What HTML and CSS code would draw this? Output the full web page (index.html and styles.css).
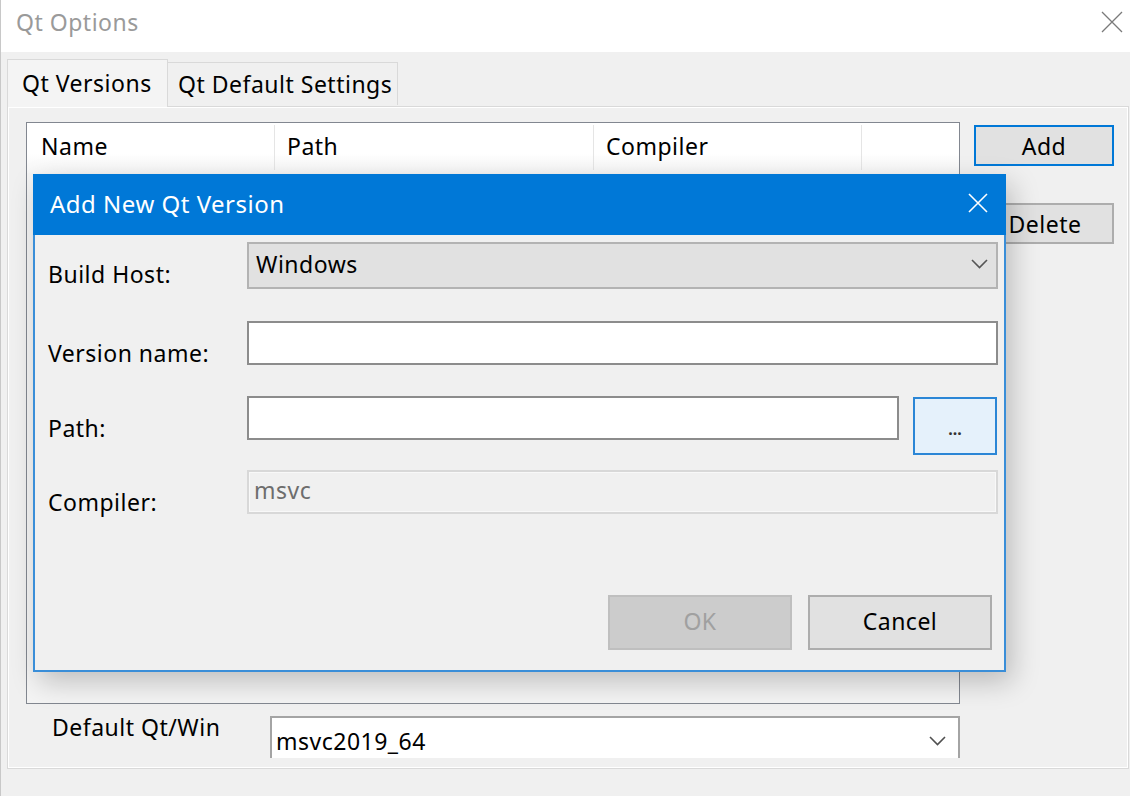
FILE: index.html
```html
<!DOCTYPE html>
<html lang="en">
<head>
<meta charset="utf-8">
<title>Qt Options</title>
<link rel="stylesheet" href="styles.css">
</head>
<body>
<div class="app">
  <header class="titlebar">
    <span class="title">Qt Options</span>
    <svg class="win-close" width="22" height="22" viewBox="0 0 22 22"><path d="M1 1 L21 21 M21 1 L1 21" stroke="#7a7a7a" stroke-width="1.3" fill="none"/></svg>
  </header>
  <main class="main">
    <nav class="tabs">
      <div class="tab tab-active">Qt Versions</div>
      <div class="tab">Qt Default Settings</div>
    </nav>
    <section class="pane">
      <div class="pane-main">
        <div class="table">
          <div class="thead">
            <div class="th th-name">Name</div>
            <div class="th th-path">Path</div>
            <div class="th th-comp">Compiler</div>
            <div class="th th-last"></div>
          </div>
          <div class="tbody"></div>
        </div>
        <div class="default-row">
          <span class="default-label">Default Qt/Win</span>
          <div class="combo-white">
            <span>msvc2019_64</span>
            <svg class="chev" width="17" height="10" viewBox="0 0 17 10"><path d="M1 1 L8.5 8.5 L16 1" stroke="#505050" stroke-width="1.6" fill="none"/></svg>
          </div>
        </div>
      </div>
      <div class="side-buttons">
        <button class="btn btn-focus">Add</button>
        <button class="btn btn-delete">Delete</button>
      </div>
    </section>
  </main>

  <div class="dialog">
    <div class="dlg-title">
      <span>Add New Qt Version</span>
      <svg class="dlg-close" width="20" height="20" viewBox="0 0 20 20"><path d="M1 1 L19 19 M19 1 L1 19" stroke="#ffffff" stroke-width="1.6" fill="none"/></svg>
    </div>
    <div class="dlg-body">
      <div class="row row-host">
        <label class="lbl">Build Host:</label>
        <div class="combo-gray">
          <span>Windows</span>
          <svg class="chev" width="17" height="10" viewBox="0 0 17 10"><path d="M1 1 L8.5 8.5 L16 1" stroke="#555555" stroke-width="1.6" fill="none"/></svg>
        </div>
      </div>
      <div class="row row-name">
        <label class="lbl">Version name:</label>
        <div class="input"></div>
      </div>
      <div class="row row-path">
        <label class="lbl">Path:</label>
        <div class="input input-path"></div>
        <button class="browse">...</button>
      </div>
      <div class="row row-comp">
        <label class="lbl">Compiler:</label>
        <div class="input input-disabled">msvc</div>
      </div>
      <div class="dlg-buttons">
        <button class="dbtn dbtn-disabled">OK</button>
        <button class="dbtn">Cancel</button>
      </div>
    </div>
  </div>
</div>
</body>
</html>
```

FILE: styles.css
```css
* { box-sizing: border-box; }
html, body { margin: 0; padding: 0; }
body {
  width: 1130px;
  height: 796px;
  overflow: hidden;
  background: #f0f0f0;
  font-family: "Noto Sans", "Open Sans", sans-serif;
  font-size: 23px;
  letter-spacing: 0.5px;
  color: #000;
}
button { font-family: inherit; font-size: inherit; letter-spacing: inherit; color: inherit; padding: 0; margin: 0; }

.app {
  position: relative;
  width: 1130px;
  height: 796px;
  border-left: 1px solid #c8c8c8;
  background: #f0f0f0;
}

/* window title bar */
.titlebar {
  height: 52px;
  background: #ffffff;
  display: flex;
  align-items: flex-start;
  justify-content: space-between;
  padding: 7px 7px 0 15px;
}
.title { color: #9a9a9a; line-height: 30px; }
.win-close { margin-top: 4px; }

/* tabs */
.main { padding: 0 1px 0 6px; }
.tabs {
  display: flex;
  align-items: flex-end;
  height: 54px;
  position: relative;
  z-index: 1;
}
.tab {
  height: 43px;
  display: flex;
  align-items: center;
  padding: 0 8px 0 10px;
  border: 1px solid #d9d9d9;
  border-bottom: none;
  background: #f0f0f0;
  margin-bottom: 1px;
  margin-left: -1px;
  white-space: nowrap;
}
.tab-active {
  height: 48px;
  width: 161px;
  margin-left: 0;
  padding-left: 14px;
  padding-bottom: 2px;
  margin-bottom: -1px;
  background: #f4f4f4;
  z-index: 2;
}
.tab:not(.tab-active) { width: 231px; }

.pane {
  height: 663px;
  border: 1px solid #d9d9d9;
  box-shadow: inset 0 0 0 1px #ffffff;
  padding: 15px 14px 10px 18px;
  display: flex;
  gap: 14px;
}
.pane-main {
  width: 934px;
  display: flex;
  flex-direction: column;
}
.table {
  height: 582px;
  border: 1px solid #828790;
  background: #f4f4f4;
  display: flex;
  flex-direction: column;
}
.thead {
  height: 50px;
  display: flex;
  background: linear-gradient(#ffffff, #ffffff 60%, #f6f6f6);
}
.th {
  display: flex;
  align-items: center;
  padding-left: 12px;
  padding-bottom: 3px;
  border-right: 1px solid #e5e5e5;
  margin: 2px 0 3px;
}
.th-name { width: 248px; padding-left: 14px; }
.th-path { width: 319px; }
.th-comp { width: 268px; }
.th-last { flex: 1; border-right: none; }
.tbody { flex: 1; }

.default-row {
  display: flex;
  margin-top: 12px;
  height: 42px;
}
.default-label {
  width: 244px;
  padding-left: 26px;
  line-height: 22px;
}
.combo-white {
  width: 690px;
  height: 42px;
  background: #ffffff;
  border: 2px solid #a4a4a4;
  border-bottom: none;
  display: flex;
  align-items: center;
  justify-content: space-between;
  padding: 6px 12px 0 4px;
}

.side-buttons {
  display: flex;
  flex-direction: column;
  gap: 37px;
  padding-top: 3px;
}
.btn {
  width: 140px;
  height: 41px;
  background: #e1e1e1;
  border: 2px solid #adadad;
  line-height: 32px;
}
.btn-focus { border-color: #0078d7; }
.btn-delete { padding-left: 2px; }

/* dialog (overlay window) */
.dialog {
  position: absolute;
  left: 32px;
  top: 174px;
  width: 973px;
  height: 498px;
  border: 2px solid #3a8ed8;
  background: #f0f0f0;
  box-shadow: 6px 10px 26px rgba(0, 0, 0, 0.22);
  display: flex;
  flex-direction: column;
}
.dlg-title {
  background: #0078d7;
  color: #ffffff;
  font-size: 24px;
  display: flex;
  align-items: center;
  justify-content: space-between;
  padding: 0 18px 2px 17px;
  margin: -2px -2px 0;
  height: 61px;
}
.dlg-close { margin-top: -2px; }

.dlg-body {
  flex: 1;
  padding: 7px 6px 0 13px;
  display: flex;
  flex-direction: column;
}
.row {
  display: flex;
  align-items: flex-start;
}
.lbl {
  width: 199px;
  flex: 0 0 199px;
  line-height: 30px;
  padding-top: 17px;
  white-space: nowrap;
}
.row-host { height: 47px; }
.row-name { height: 44px; margin-top: 32px; }
.row-path { height: 59px; margin-top: 31px; }
.row-comp { height: 44px; margin-top: 15px; }

.combo-gray {
  flex: 1;
  height: 47px;
  background: #e1e1e1;
  border: 2px solid #b3b3b3;
  display: flex;
  align-items: center;
  justify-content: space-between;
  padding: 0 8px 4px 7px;
}
.input {
  flex: 1;
  height: 44px;
  background: #ffffff;
  border: 2px solid #8c8c8c;
}
.input-path { flex: 0 0 652px; }
.browse {
  width: 84px;
  height: 58px;
  margin: 1px 0 0 14px;
  background: #e5f1fb;
  border: 2px solid #2b86d6;
  font-size: 16px;
  font-weight: bold;
  letter-spacing: 0;
  line-height: 1;
  padding-top: 6px;
  color: #333;
}
.input-disabled {
  background: #f0f0f0;
  border: 2px solid #d8d8d8;
  box-shadow: inset 0 0 0 1px #f8f8f8;
  color: #6d6d6d;
  padding: 1px 0 0 5px;
  line-height: 34px;
}

.dlg-buttons {
  display: flex;
  justify-content: flex-end;
  gap: 16px;
  margin-top: 81px;
  padding-right: 6px;
}
.dbtn {
  width: 184px;
  height: 55px;
  background: #e1e1e1;
  border: 2px solid #adadad;
  padding-bottom: 3px;
}
.dbtn-disabled {
  background: #cccccc;
  border-color: #bfbfbf;
  color: #a0a0a0;
}
```
